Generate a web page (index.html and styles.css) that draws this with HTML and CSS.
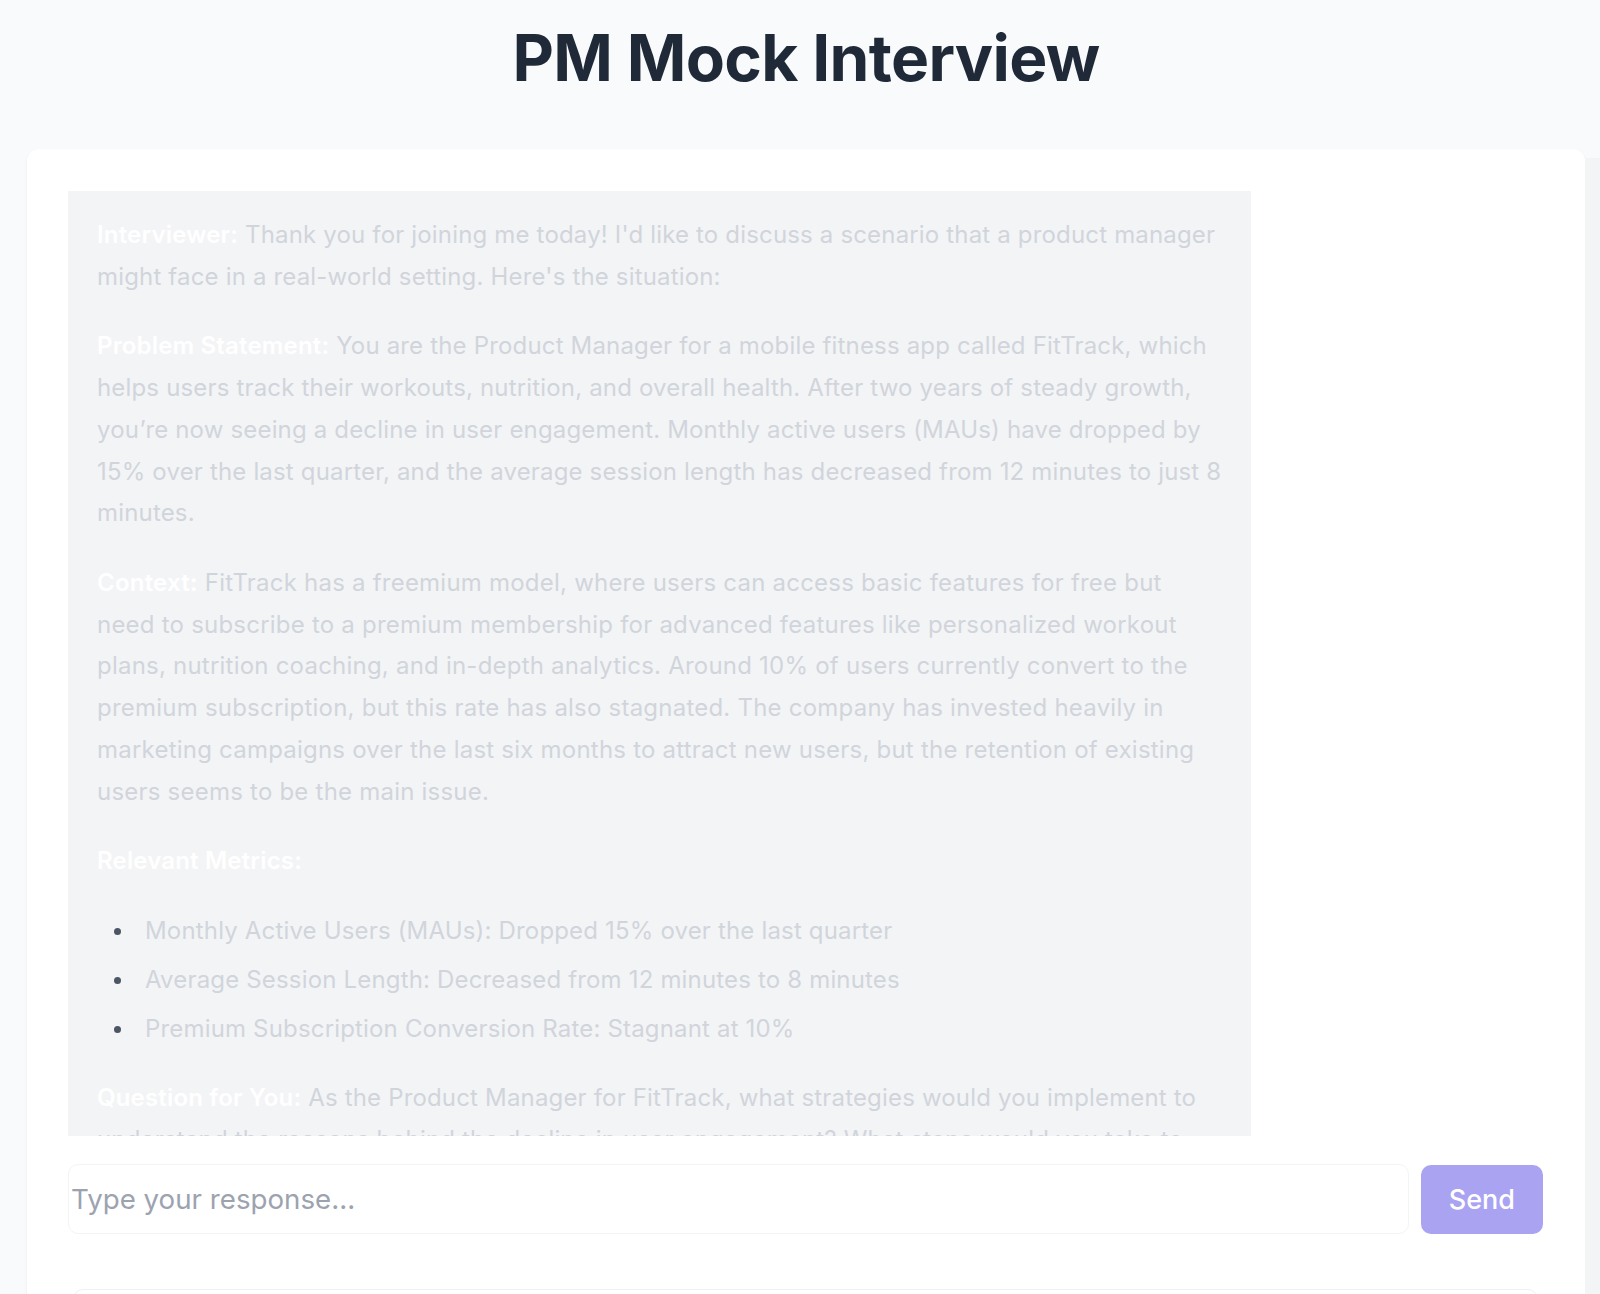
FILE: index.html
```html
<!DOCTYPE html>
<html lang="en">
<head>
<meta charset="utf-8">
<title>PM Mock Interview</title>
<link rel="stylesheet" href="styles.css">
</head>
<body>
<div class="page">
  <main class="wrap">
    <h1 class="title">PM Mock Interview</h1>
    <section class="card">
      <div class="chat">
        <div class="message">
          <p><strong>Interviewer:</strong> Thank you for joining me today! I'd like to discuss a scenario that a product manager might face in a real-world setting. Here's the situation:</p>
          <p><strong>Problem Statement:</strong> You are the Product Manager for a mobile fitness app called FitTrack, which helps users track their workouts, nutrition, and overall health. After two years of steady growth, you’re now seeing a decline in user engagement. Monthly active users (MAUs) have dropped by 15% over the last quarter, and the average session length has decreased from 12 minutes to just 8 minutes.</p>
          <p class="ctx"><strong>Context:</strong> FitTrack has a freemium model, where users can access basic features for free but need to subscribe to a premium membership for advanced features like personalized workout plans, nutrition coaching, and in-depth analytics. Around 10% of users currently convert to the premium subscription, but this rate has also stagnated. The company has invested heavily in marketing campaigns over the last six months to attract new users, but the retention of existing users seems to be the main issue.</p>
          <p><strong>Relevant Metrics:</strong></p>
          <ul>
            <li>Monthly Active Users (MAUs): Dropped 15% over the last quarter</li>
            <li>Average Session Length: Decreased from 12 minutes to 8 minutes</li>
            <li>Premium Subscription Conversion Rate: Stagnant at 10%</li>
          </ul>
          <p><strong>Question for You:</strong> As the Product Manager for FitTrack, what strategies would you implement to understand the reasons behind the decline in user engagement? What steps would you take to address this issue and improve user retention?</p>
        </div>
      </div>
      <form class="composer">
        <input class="field" type="text" placeholder="Type your response...">
        <button class="send" type="button">Send</button>
      </form>
      <div class="next-box"></div>
    </section>
  </main>
  <div class="track"></div>
</div>
</body>
</html>
```
FILE: styles.css
```css
html, body {
  margin: 0;
  padding: 0;
  height: 100%;
  overflow: hidden;
}
body {
  background: #f9fafb;
  font-family: Inter, "Noto Sans", "Liberation Sans", sans-serif;
  color: #1f2937;
}
.page {
  display: flex;
  height: 1294px;
}
.wrap {
  flex: 1;
  padding-left: 27px;
  min-width: 0;
}
.track {
  width: 15px;
  background: #f3f4f6;
  margin-top: 158px;
}
.title {
  margin: 26px 0 59px;
  font-size: 64px;
  line-height: 64px;
  font-weight: 700;
  letter-spacing: -0.65px;
  text-align: center;
  color: #1f2937;
}
.card {
  background: #ffffff;
  border-radius: 12px;
  box-shadow: 0 1px 3px rgba(0, 0, 0, 0.06);
  padding: 42px 42px 0 41px;
}
.chat {
  height: 945px;
  overflow: hidden;
}
.message {
  width: calc(80% + 3px);
  box-sizing: border-box;
  background: #f3f4f6;
  padding: 23px 28px 23px 29px;
  font-size: 24px;
  line-height: 41.8px;
  letter-spacing: 0.17px;
  color: #d1d5db;
}
.message p {
  margin: 0 0 27.6px;
}
.message .ctx {
  letter-spacing: 0.22px;
}
.message strong {
  color: #ffffff;
  font-weight: 600;
}
.message ul {
  margin: 0 0 27.6px;
  padding-left: 48px;
  list-style: none;
}
.message li {
  position: relative;
  margin-bottom: 7.2px;
}
.message li:last-child {
  margin-bottom: 0;
}
.message li::before {
  content: "";
  position: absolute;
  left: -31px;
  top: 18px;
  width: 7px;
  height: 7px;
  border-radius: 50%;
  background: #4b5563;
}
.composer {
  display: flex;
  align-items: center;
  gap: 12px;
  margin: 28px 0 0;
}
.field {
  flex: 1;
  height: 70px;
  box-sizing: border-box;
  border: 1px solid #f3f4f6;
  border-radius: 10px;
  padding: 0 2px;
  font-family: inherit;
  font-size: 27.7px;
  color: #111827;
  background: #ffffff;
  outline: none;
}
.field::placeholder {
  color: #9ca3af;
}
.send {
  height: 69px;
  padding: 0 28px;
  border: none;
  border-radius: 10px;
  background: #a9a3f2;
  color: #ffffff;
  font-family: inherit;
  font-size: 27px;
  font-weight: 500;
}
.next-box {
  margin: 55px 5px 0;
  height: 60px;
  border: 1px solid #eef0f2;
  border-radius: 10px;
}
```
